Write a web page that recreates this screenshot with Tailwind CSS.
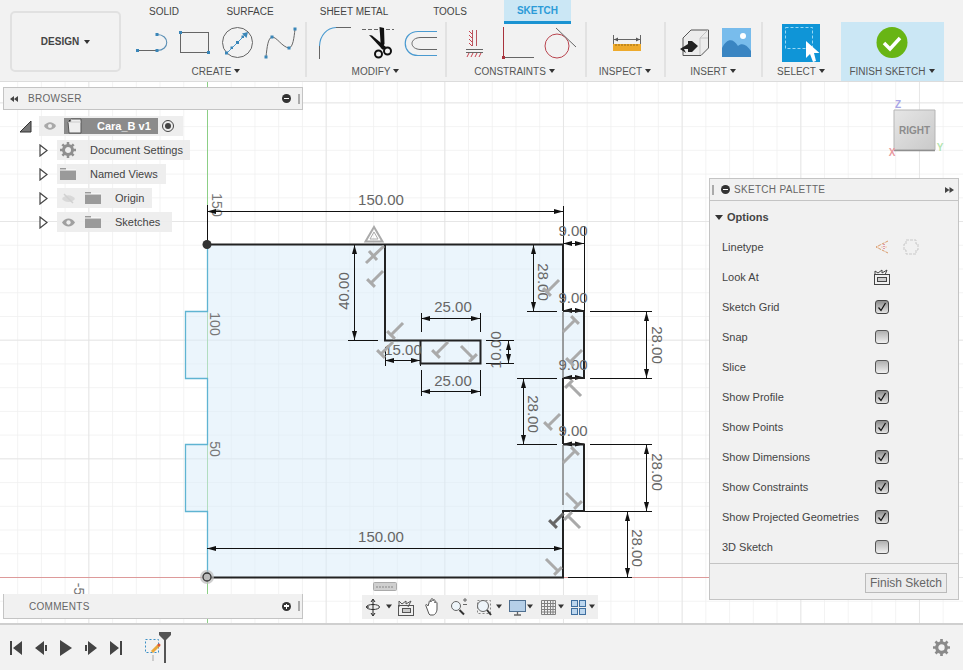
<!DOCTYPE html>
<html lang="en">
<head>
  <meta charset="UTF-8" />
  <title>Sketch workspace</title>
  <script src="https://cdn.jsdelivr.net/npm/@tailwindcss/browser@4"></script>
</head>
<body class="w-[963px] h-[670px] overflow-hidden bg-white font-['Liberation_Sans',sans-serif] text-[#444]">
<div class="flex flex-col h-[670px]">

  <!-- toolbar -->
  <header class="flex h-[82px] bg-[#f2f2f2] border-b border-[#dcdcdc] shrink-0">
    <div class="w-[130px] pl-[10px] pt-[11px] shrink-0">
      <div class="w-[111px] h-[61px] border-2 border-[#e1e1e1] rounded-[5px] flex items-center justify-center gap-[5px] text-[10px] font-bold text-[#444]">
        DESIGN <span class="border-x-[3px] border-t-[4px] border-x-transparent border-t-[#333]"></span>
      </div>
    </div>
    <div class="flex flex-col flex-1">
      <nav class="flex h-[22px] shrink-0 text-[10px] text-[#444]">
        <div class="w-[68px] h-[22px] flex items-center justify-center">SOLID</div>
        <div class="w-[104px] h-[22px] flex items-center justify-center">SURFACE</div>
        <div class="w-[104px] h-[22px] flex items-center justify-center">SHEET METAL</div>
        <div class="w-[88px] h-[22px] flex items-center justify-center">TOOLS</div>
        <div class="ml-[10px] w-[67px] h-[24px] flex items-center justify-center bg-[#cbe7f5] border-b-[3px] border-[#1b93d2] font-bold text-[#2b9bd8]">SKETCH</div>
      </nav>
      <div class="flex h-[59px]">
        <!-- create -->
        <div class="w-[177px] flex flex-col border-r-2 border-[#e2e2e2] mb-[4px]">
          <svg class="w-[177px] h-[41px] shrink-0" viewBox="130 22 177 41" fill="none">
            <path d="M138 50.500H157" stroke="#666"/><path d="M157 34.500C170 34.500 170 50.500 157 50.500" stroke="#5a8fb5" stroke-width="1.100"/>
            <rect x="136" y="49" width="3" height="3" fill="#3a86b8"/><rect x="155.500" y="49" width="3" height="3" fill="#3a86b8"/><rect x="155.500" y="33" width="3" height="3" fill="#3a86b8"/>
            <rect x="180.500" y="32.500" width="28" height="20" stroke="#666"/>
            <rect x="179" y="31" width="3" height="3" fill="#3a86b8"/><rect x="207" y="51" width="3" height="3" fill="#3a86b8"/>
            <circle cx="237.500" cy="42.500" r="15" stroke="#666"/>
            <path d="M227 53L247 33" stroke="#4a9ad0"/><path d="M248 32l-6 1.500 4.500 4.500z" fill="#3a86b8"/>
            <rect x="236" y="41" width="3" height="3" fill="#3a86b8"/><rect x="230.500" y="46.500" width="2.500" height="2.500" fill="#3a86b8"/><rect x="241.500" y="35.500" width="2.500" height="2.500" fill="#3a86b8"/><rect x="225" y="51.500" width="3" height="3" fill="#3a86b8"/>
            <path d="M266 57C267 47 268 38 272 37C277 37 282 47 289 48C293 47 294 38 295 29" stroke="#666"/>
            <rect x="264.500" y="55.500" width="3" height="3" fill="#3a86b8"/><rect x="270.500" y="35.500" width="3" height="3" fill="#3a86b8"/><rect x="287.500" y="46.500" width="3" height="3" fill="#3a86b8"/><rect x="293.500" y="27.500" width="3" height="3" fill="#3a86b8"/>
          </svg>
          <div class="flex items-center justify-center gap-[3px] text-[10px] text-[#555] h-[14px] shrink-0 mt-[1px] -ml-[3px]">CREATE <span class="border-x-[3px] border-t-[4px] border-x-transparent border-t-[#333]"></span></div>
        </div>
        <!-- modify -->
        <div class="w-[140px] flex flex-col border-r-2 border-[#e2e2e2] mb-[4px]">
          <svg class="w-[140px] h-[41px] shrink-0" viewBox="307 22 140 41" fill="none">
            <path d="M319.500 59V46" stroke="#666"/><path d="M319.500 46C320 35 327 28 336 27.500" stroke="#4a9ad0" stroke-width="1.100"/><path d="M336 27.500H351" stroke="#666"/>
            <path d="M362 29.500H394" stroke="#666" stroke-dasharray="4 2"/>
            <path d="M379.500 27L384 28L384.500 44L381 49Z" fill="#111"/><path d="M369 35L372 35.500L386 47L383 50Z" fill="#111"/>
            <circle cx="378.500" cy="54" r="3.500" stroke="#111" stroke-width="2"/><circle cx="387.500" cy="51" r="3.500" stroke="#111" stroke-width="2"/>
            <path d="M437 31.500H418C401 31.500 401 55.500 418 55.500H437" stroke="#4a9ad0" stroke-width="1.200"/>
            <path d="M437 37.500H421C409 37.500 409 49.500 421 49.500H437" stroke="#666"/>
          </svg>
          <div class="flex items-center justify-center gap-[3px] text-[10px] text-[#555] h-[14px] shrink-0 mt-[1px] -ml-[1px]">MODIFY <span class="border-x-[3px] border-t-[4px] border-x-transparent border-t-[#333]"></span></div>
        </div>
        <!-- constraints -->
        <div class="w-[140px] flex flex-col border-r-2 border-[#e2e2e2] mb-[4px]">
          <svg class="w-[140px] h-[41px] shrink-0" viewBox="447 22 140 41" fill="none">
            <path d="M472.500 30V46M476.500 30V46" stroke="#b9555f"/><path d="M469 31l3 3M469 35l3 3M469 39l3 3M469 43l3 3" stroke="#c9434f"/>
            <path d="M466 49.500H483" stroke="#666"/><path d="M466 52.500H483" stroke="#666"/><path d="M469 53l-2 4M473 53l-2 4M477 53l-2 4M481 53l-2 4" stroke="#c9434f"/>
            <path d="M503.500 27V58" stroke="#a8323c"/><path d="M503.500 57.500H534" stroke="#666"/><rect x="502" y="56" width="3" height="3" fill="#a8323c"/>
            <circle cx="557" cy="46" r="12" stroke="#b9444e"/><path d="M556 28L576 47" stroke="#666"/>
          </svg>
          <div class="flex items-center justify-center gap-[3px] text-[10px] text-[#555] h-[14px] shrink-0 mt-[1px] -ml-[3px]">CONSTRAINTS <span class="border-x-[3px] border-t-[4px] border-x-transparent border-t-[#333]"></span></div>
        </div>
        <!-- inspect -->
        <div class="w-[79px] flex flex-col border-r-2 border-[#e2e2e2] mb-[4px]">
          <svg class="w-[79px] h-[41px] shrink-0" viewBox="587 22 79 41" fill="none">
            <path d="M613.500 35V44M640.500 35V44" stroke="#666"/><path d="M614 39.500H640" stroke="#666"/><path d="M614 39.500l4-2v4zM640 39.500l-4-2v4z" fill="#555"/>
            <rect x="613" y="44" width="28" height="7" fill="#eeaa2c"/><path d="M616 44v2M619 44v2M622 44v2M625 44v2M628 44v2M631 44v2M634 44v2M637 44v2" stroke="#9a6a10"/>
          </svg>
          <div class="flex items-center justify-center gap-[3px] text-[10px] text-[#555] h-[14px] shrink-0 mt-[1px] -ml-[1px]">INSPECT <span class="border-x-[3px] border-t-[4px] border-x-transparent border-t-[#333]"></span></div>
        </div>
        <!-- insert -->
        <div class="w-[97px] flex flex-col border-r-2 border-[#e2e2e2] mb-[4px]">
          <svg class="w-[97px] h-[41px] shrink-0" viewBox="666 22 97 41" fill="none">
            <path d="M683 55.500V38L691 30H708.500V48L701 55.500Z" fill="#ececec" stroke="#555"/><path d="M700 55V38H708M700 38L708 30" stroke="#c4c4c4"/>
            <path d="M680 49L688 44V41H692L698 46L692 52H688V49H684L686 53Z" fill="#222"/>
            <rect x="722" y="28" width="29" height="29" fill="#78bcec"/><path d="M722 57V48C727 38 733 38 738 46C742 42 747 45 751 51V57Z" fill="#3a85c2"/><circle cx="743" cy="36" r="3" fill="#fff"/>
          </svg>
          <div class="flex items-center justify-center gap-[3px] text-[10px] text-[#555] h-[14px] shrink-0 mt-[1px] -ml-[1px]">INSERT <span class="border-x-[3px] border-t-[4px] border-x-transparent border-t-[#333]"></span></div>
        </div>
        <!-- select -->
        <div class="w-[78px] flex flex-col mb-[4px]">
          <svg class="w-[78px] h-[41px] shrink-0" viewBox="763 22 78 41" fill="none">
            <rect x="782" y="24" width="38" height="38" fill="#0f95d7"/><rect x="785.500" y="27.500" width="27" height="21" stroke="#9ad8f5" stroke-dasharray="3 2"/>
            <path d="M806 41V58L810 54L813 62L816 61L814 53H819.500Z" fill="#fff"/>
          </svg>
          <div class="flex items-center justify-center gap-[3px] text-[10px] text-[#555] h-[14px] shrink-0 mt-[1px] -ml-[2px]">SELECT <span class="border-x-[3px] border-t-[4px] border-x-transparent border-t-[#333]"></span></div>
        </div>
        <!-- finish sketch -->
        <div class="w-[103px] flex flex-col bg-[#cbe7f5]">
          <svg class="w-[103px] h-[41px] shrink-0" viewBox="841 22 103 41" fill="none">
            <circle cx="892" cy="42.500" r="15.500" fill="#68b514"/><path d="M884 43L890 49L900 38" stroke="#fff" stroke-width="3.500"/>
          </svg>
          <div class="flex items-center justify-center gap-[3px] text-[10px] text-[#555] h-[14px] shrink-0 mt-[1px] -ml-[1px]">FINISH SKETCH <span class="border-x-[3px] border-t-[4px] border-x-transparent border-t-[#333]"></span></div>
        </div>
      </div>
    </div>
  </header>

  <!-- canvas -->
  <main class="relative flex-1 overflow-hidden bg-white">
    <svg class="absolute inset-0" width="963" height="541" viewBox="0 82 963 541" fill="none" font-family="Liberation Sans" font-size="15">
      <defs>
        <pattern id="minor" patternUnits="userSpaceOnUse" x="207" y="577" width="23.730" height="23.730"><path d="M0 0H23.730M0 0V23.730" stroke="#f0f0f0" stroke-width="1.500"/></pattern>
        <pattern id="major" patternUnits="userSpaceOnUse" x="207" y="577" width="118.670" height="118.670"><path d="M0 0H118.670M0 0V118.670" stroke="#e2e2e2" stroke-width="1.500"/></pattern>
        <g id="t"><path d="M-5.500 0H5.500M0 0V17" stroke="#aaa" stroke-width="3"/></g>
        <g id="tdark"><path d="M-5.500 0H5.500M0 0V15" stroke="#666" stroke-width="3"/></g>
        <path id="ah" d="M0 0L9 -2.500V2.500Z" fill="#111"/>
      </defs>
      <rect x="0" y="82" width="963" height="541" fill="url(#minor)"/>
      <rect x="0" y="82" width="963" height="541" fill="url(#major)"/>

      <!-- axes -->
      <path d="M0 577.500H710" stroke="#dd9a9a"/>
      <path d="M207.500 82V623" stroke="#8ccf86"/>

      <!-- profile -->
      <path d="M207 244.500H563V311H584V378H563V444H584V511H563V577H207V511H185V444H207V378H185V311H207Z" fill="#d8ecfa" fill-opacity=".5"/>

      <!-- projected edge -->
      <path d="M207.500 245V311.500H185.500V378.500H207.500V444.500H185.500V511.500H207.500V577" stroke="#5fb4d2" stroke-width="1.300"/>

      <!-- grid labels -->
      <g fill="#777" font-size="14">
        <text transform="translate(212 205) rotate(90)" text-anchor="middle">150</text>
        <text transform="translate(210 324) rotate(90)" text-anchor="middle">100</text>
        <text transform="translate(210 449) rotate(90)" text-anchor="middle">50</text>
        <text transform="translate(74 589) rotate(90)" text-anchor="middle">-5</text>
      </g>

      <!-- dimensions -->
      <g stroke="#111">
        <path d="M207.500 205V244M207 211.500H563M563.500 206V244"/>
        <path d="M207 548.500H563"/>
        <path d="M584.500 226V311M563 243.500H584"/>
        <path d="M354.500 245V340M348 340.500H378"/>
        <path d="M533.500 245V311M527 311.500H557"/>
        <path d="M421.500 313V332M480.500 313V332M421 318.500H480"/>
        <path d="M421.500 370V396M480.500 370V396M421 391.500H480"/>
        <path d="M385.500 347V366M385 360.500H420M420.500 362V366"/>
        <path d="M486 340.500H514M486 363.500H514M508.500 341V363"/>
        <path d="M590 311.500H652M646.500 312V378M590 378.500H652"/>
        <path d="M517 378.500H557M523.500 379V444M517 444.500H557"/>
        <path d="M590 444.500H652M646.500 445V511M584 511.500H652"/>
        <path d="M627.500 511V577M568 577.500H632"/>
        <path d="M563 310.500H584M563 377.500H584M563 444H584"/>
      </g>
      <g>
        <use href="#ah" transform="translate(207 211.500)"/><use href="#ah" transform="translate(563 211.500) rotate(180)"/>
        <use href="#ah" transform="translate(207 548.500)"/><use href="#ah" transform="translate(563 548.500) rotate(180)"/>
        <use href="#ah" transform="translate(563 243.500)"/><use href="#ah" transform="translate(584 243.500) rotate(180)"/>
        <use href="#ah" transform="translate(563 310.500)"/><use href="#ah" transform="translate(584 310.500) rotate(180)"/>
        <use href="#ah" transform="translate(563 377.500)"/><use href="#ah" transform="translate(584 377.500) rotate(180)"/>
        <use href="#ah" transform="translate(563 444)"/><use href="#ah" transform="translate(584 444) rotate(180)"/>
        <use href="#ah" transform="translate(421 318.500)"/><use href="#ah" transform="translate(480 318.500) rotate(180)"/>
        <use href="#ah" transform="translate(421 391.500)"/><use href="#ah" transform="translate(480 391.500) rotate(180)"/>
        <use href="#ah" transform="translate(385 360.500)"/><use href="#ah" transform="translate(420 360.500) rotate(180)"/>
        <use href="#ah" transform="translate(354.500 245) rotate(90)"/><use href="#ah" transform="translate(354.500 340) rotate(-90)"/>
        <use href="#ah" transform="translate(533.500 245) rotate(90)"/><use href="#ah" transform="translate(533.500 311) rotate(-90)"/>
        <use href="#ah" transform="translate(508.500 341) rotate(90)"/><use href="#ah" transform="translate(508.500 363) rotate(-90)"/>
        <use href="#ah" transform="translate(646.500 312) rotate(90)"/><use href="#ah" transform="translate(646.500 378) rotate(-90)"/>
        <use href="#ah" transform="translate(523.500 379) rotate(90)"/><use href="#ah" transform="translate(523.500 444) rotate(-90)"/>
        <use href="#ah" transform="translate(646.500 445) rotate(90)"/><use href="#ah" transform="translate(646.500 511) rotate(-90)"/>
        <use href="#ah" transform="translate(627.500 512) rotate(90)"/><use href="#ah" transform="translate(627.500 577) rotate(-90)"/>
      </g>

      <!-- sketch outline -->
      <g stroke="#222" stroke-width="2">
        <path d="M207 244.500H563V311"/>
        <path d="M385 244V340.500H480.500V363.500H420.500V340"/>
        <path d="M563 378V444"/>
        <path d="M584 311V378H563M563 444.500H584V511H563V577.500H207"/>
        <path d="M563 311H584"/>
      </g>
      <path d="M563 312V378M563 445V505" stroke="#808080" stroke-width="1.500"/>
      <circle cx="207" cy="244.500" r="4.500" fill="#333"/>
      <circle cx="207" cy="577" r="7" fill="#bbb" fill-opacity=".7"/><circle cx="207" cy="577" r="4" fill="#bbb" stroke="#333" stroke-width="1.300"/>

      <!-- dimension values -->
      <g fill="#666" text-anchor="middle" font-size="15">
        <text x="381" y="205">150.00</text>
        <text x="381" y="542">150.00</text>
        <text x="573" y="236">9.00</text>
        <text x="573" y="303">9.00</text>
        <text x="573" y="370">9.00</text>
        <text x="573" y="436">9.00</text>
        <text x="453" y="312">25.00</text>
        <text x="453" y="385.500">25.00</text>
        <text x="403" y="355">15.00</text>
        <text transform="translate(348.500 291) rotate(-90)">40.00</text>
        <text transform="translate(538 282) rotate(90)">28.00</text>
        <text transform="translate(501 350) rotate(-90)">10.00</text>
        <text transform="translate(651.500 345) rotate(90)">28.00</text>
        <text transform="translate(527.500 414) rotate(90)">28.00</text>
        <text transform="translate(651.500 472) rotate(90)">28.00</text>
        <text transform="translate(631.500 548) rotate(90)">28.00</text>
      </g>

      <!-- constraint glyphs -->
      <g>
        <path d="M366 263L384 246M369 251L377 260" stroke="#aaa" stroke-width="3"/>
        <use href="#t" transform="translate(371 283) rotate(225)"/>
        <use href="#t" transform="translate(391 335) rotate(225)"/>
        <use href="#t" transform="translate(381 354) rotate(225)"/>
        <use href="#t" transform="translate(436 354) rotate(225)"/>
        <use href="#t" transform="translate(473 358) rotate(135)"/>
        <use href="#t" transform="translate(547 292) rotate(225)"/>
        <use href="#t" transform="translate(575 320) rotate(45)"/>
        <use href="#t" transform="translate(570 362) rotate(225)"/>
        <use href="#t" transform="translate(569 384) rotate(-45)"/>
        <use href="#t" transform="translate(548 426) rotate(225)"/>
        <use href="#t" transform="translate(575 451) rotate(45)"/>
        <use href="#t" transform="translate(578 505) rotate(135)"/>
        <use href="#t" transform="translate(568 516) rotate(-45)"/>
        <use href="#tdark" transform="translate(553 524) rotate(225)"/>
        <use href="#t" transform="translate(558 571) rotate(135)"/>
        <path d="M374 227L365.500 241.500H382.500Z" stroke="#aaa" stroke-width="2"/><path d="M374 232L370 239H378Z" stroke="#aaa"/>
      </g>

      <!-- view cube -->
      <defs><linearGradient id="cube" x1="0" y1="0" x2="1" y2="1"><stop offset="0" stop-color="#e6e6e6"/><stop offset="1" stop-color="#c9c9c9"/></linearGradient></defs>
      <path d="M894 110H935V150H894Z" fill="url(#cube)" stroke="#b5b5b5"/>
      <path d="M894 150.500H935" stroke="#8f8f8f" stroke-width="1.500"/>
      <text x="914.500" y="134" text-anchor="middle" font-size="10" font-weight="700" fill="#8c8c8c">RIGHT</text>
      <text x="898" y="108" text-anchor="middle" font-size="10" font-weight="700" fill="#a9a6e6">Z</text>
      <text x="892" y="156" text-anchor="middle" font-size="10" font-weight="700" fill="#e89aa0">X</text>
      <text x="940" y="151" text-anchor="middle" font-size="10" font-weight="700" fill="#b5e4b0">Y</text>

      <!-- sketch scale chip -->
      <rect x="373.500" y="582.500" width="23" height="8" fill="#cfcfcf" stroke="#aaa" rx="1"/>
      <path d="M376 587h18" stroke="#888" stroke-dasharray="2 1"/>
    </svg>

    <!-- browser panel -->
    <aside class="absolute left-[3px] top-[5px] w-[300px]">
      <div class="h-[23px] flex items-center bg-[#f1f1f1] border border-[#c4c4c4] pl-[6px] pr-[1px] text-[10px] tracking-[.3px] text-[#666]">
        <svg class="w-[8px] h-[6px]" viewBox="0 0 8 6"><path d="M4 0v6L0 3zM8 0v6L4 3z" fill="#444"/></svg>
        <span class="ml-[10px]">BROWSER</span>
        <span class="ml-auto w-[9px] h-[9px] rounded-full bg-[#333] flex items-center justify-center"><span class="w-[5px] h-[1.5px] bg-white"></span></span>
        <span class="ml-[7px] mr-[1px] w-[2px] h-[10px] border-x border-[#aaa]"></span>
      </div>

      <div class="flex items-center h-[18px] mt-[7px] ml-[16px]">
        <svg class="w-[13px] h-[13px] shrink-0" viewBox="0 0 13 13"><path d="M12 1V12H1Z" fill="#777" stroke="#333"/></svg>
        <div class="ml-[7px] w-[144px] h-[20px] bg-[#ececec]/90 flex items-center pl-[5px]">
          <svg class="w-[12px] h-[8px] shrink-0" viewBox="0 0 12 8"><path d="M0 4C3 -1 9 -1 12 4C9 9 3 9 0 4Z" fill="#a9a9a9"/><circle cx="6" cy="4" r="2" fill="#eee"/></svg>
          <div class="ml-[8px] w-[94px] h-[16px] bg-[#8b8b8b] flex items-center text-[11px] font-bold text-white">
            <svg class="ml-[3px] w-[15px] h-[16px] shrink-0" viewBox="0 0 15 16"><path d="M1 4L4 1H14V15H2Z" fill="#eee" stroke="#555"/><path d="M4 1V4H1M4 4H14" stroke="#ccc"/></svg>
            <span class="ml-[15px]">Cara_B v1</span>
          </div>
          <span class="ml-[4px] w-[12px] h-[12px] rounded-full border border-[#444] flex items-center justify-center"><span class="w-[6px] h-[6px] rounded-full bg-[#444]"></span></span>
        </div>
      </div>

      <div class="flex items-center h-[20px] mt-[5px] ml-[36px]">
        <svg class="w-[9px] h-[13px] shrink-0" viewBox="0 0 9 13"><path d="M1 1L8 6.500L1 12Z" fill="#fff" stroke="#444" stroke-width="1.200"/></svg>
        <div class="ml-[9px] h-[20px] w-[133px] bg-[#ececec]/90 flex items-center pl-[3px] text-[11px] text-[#444]">
          <svg class="w-[16px] h-[16px] shrink-0" viewBox="0 0 16 16"><circle cx="8" cy="8" r="4.500" fill="none" stroke="#8f8f8f" stroke-width="3"/><path d="M8 0V16M0 8H16M2.300 2.300L13.700 13.700M13.700 2.300L2.300 13.700" stroke="#8f8f8f" stroke-width="2.500" stroke-dasharray="3 10"/></svg>
          <span class="ml-[14px]">Document Settings</span>
        </div>
      </div>
      <div class="flex items-center h-[20px] mt-[4px] ml-[36px]">
        <svg class="w-[9px] h-[13px] shrink-0" viewBox="0 0 9 13"><path d="M1 1L8 6.500L1 12Z" fill="#fff" stroke="#444" stroke-width="1.200"/></svg>
        <div class="ml-[9px] h-[20px] w-[109px] bg-[#ececec]/90 flex items-center pl-[3px] text-[11px] text-[#444]">
          <svg class="w-[16px] h-[12px] shrink-0" viewBox="0 0 16 12"><path d="M0 0H6V2H16V12H0Z" fill="#9a9a9a"/><path d="M0 2H16" stroke="#fff"/></svg>
          <span class="ml-[14px]">Named Views</span>
        </div>
      </div>
      <div class="flex items-center h-[20px] mt-[4px] ml-[36px]">
        <svg class="w-[9px] h-[13px] shrink-0" viewBox="0 0 9 13"><path d="M1 1L8 6.500L1 12Z" fill="#fff" stroke="#444" stroke-width="1.200"/></svg>
        <div class="ml-[9px] h-[20px] w-[95px] bg-[#ececec]/90 flex items-center pl-[5px] text-[11px] text-[#444]">
          <svg class="w-[13px] h-[11px] shrink-0" viewBox="0 0 13 11" fill="none"><path d="M0 6C3 1 10 1 13 6C10 10 3 10 0 6Z" fill="#d8d8d8"/><path d="M2 1L11 10" stroke="#d0d0d0" stroke-width="1.500"/></svg>
          <svg class="ml-[10px] w-[16px] h-[12px] shrink-0" viewBox="0 0 16 12"><path d="M0 0H6V2H16V12H0Z" fill="#9a9a9a"/><path d="M0 2H16" stroke="#fff"/></svg>
          <span class="ml-[14px]">Origin</span>
        </div>
      </div>
      <div class="flex items-center h-[20px] mt-[4px] ml-[36px]">
        <svg class="w-[9px] h-[13px] shrink-0" viewBox="0 0 9 13"><path d="M1 1L8 6.500L1 12Z" fill="#fff" stroke="#444" stroke-width="1.200"/></svg>
        <div class="ml-[9px] h-[20px] w-[115px] bg-[#ececec]/90 flex items-center pl-[5px] text-[11px] text-[#444]">
          <svg class="w-[13px] h-[9px] shrink-0" viewBox="0 0 12 8"><path d="M0 4C3 -1 9 -1 12 4C9 9 3 9 0 4Z" fill="#a0a0a0"/><circle cx="6" cy="4" r="2" fill="#eee"/></svg>
          <svg class="ml-[10px] w-[16px] h-[12px] shrink-0" viewBox="0 0 16 12"><path d="M0 0H6V2H16V12H0Z" fill="#9a9a9a"/><path d="M0 2H16" stroke="#fff"/></svg>
          <span class="ml-[14px]">Sketches</span>
        </div>
      </div>
    </aside>

    <!-- comments panel -->
    <aside class="absolute left-[3px] top-[512px] w-[300px] h-[25px] flex items-center bg-[#f1f1f1] border border-t-0 border-[#c4c4c4] pl-[25px] pr-[1px] text-[10px] tracking-[.3px] text-[#666]">
      <span>COMMENTS</span>
      <span class="ml-auto w-[9px] h-[9px] rounded-full bg-[#333] flex items-center justify-center relative"><span class="w-[5px] h-[1.500px] bg-white"></span><span class="absolute w-[1.500px] h-[5px] bg-white"></span></span>
      <span class="ml-[7px] mr-[1px] w-[2px] h-[10px] border-x border-[#aaa]"></span>
    </aside>

    <!-- navigation bar -->
    <div class="absolute left-[362px] top-[513px] w-[236px] h-[24px] bg-[#efefef]">
      <svg width="236" height="24" viewBox="362 595 236 24" fill="none">
        <ellipse cx="373" cy="607" rx="6.500" ry="2.500" stroke="#333"/><path d="M373 600V615M371 602l2-3 2 3M371 613l2 3 2-3" stroke="#222"/><path d="M366 607h3" stroke="#222"/>
        <path d="M386 604.500h6l-3 4z" fill="#333"/>
        <path d="M399 607V601L402 604L406 601V604L411 601L408 607" stroke="#555"/><rect x="398.500" y="605.500" width="15" height="10" stroke="#555"/><rect x="402.500" y="608.500" width="8" height="4" stroke="#555" fill="#ccc"/>
        <path d="M429 614L426 606C425 604 427 604 428 606L429 603C429 600 431 600 431 602V600C431 598 433 598 433 600V601C433 599 435 599 435 601V603C435 601 437 602 437 603V609C437 612 435 615 433 615H430Z" fill="#fff" stroke="#555"/>
        <circle cx="456" cy="606" r="4.500" stroke="#666" fill="#eef5fa"/><path d="M459.500 610L464 614.500" stroke="#333" stroke-width="2"/><path d="M463 600h4M465 598v4M463 604.500h4" stroke="#666"/>
        <rect x="477.500" y="600.500" width="13" height="13" stroke="#888" stroke-dasharray="2 2"/><circle cx="483" cy="606" r="5.500" stroke="#666" fill="#eef5fa"/><path d="M487 610L491 615" stroke="#333" stroke-width="2"/>
        <path d="M496 604.500h6l-3 4z" fill="#333"/>
        <rect x="509.500" y="600.500" width="16" height="11" fill="#b5cfe8" stroke="#4f6f90"/><path d="M514 615H521M517.500 612V615" stroke="#666" stroke-width="1.300"/>
        <path d="M527 604.500h6l-3 4z" fill="#333"/>
        <path d="M541.500 600.500h14v14h-14zM544.500 600.500v14M547.500 600.500v14M550.500 600.500v14M553 600.500v14M541.500 603.500h14M541.500 606.500h14M541.500 609.500h14M541.500 612h14" stroke="#808080"/>
        <path d="M558 604.500h6l-3 4z" fill="#333"/>
        <rect x="571.500" y="600.500" width="6" height="6" fill="#bcd6ee" stroke="#3f6f9f"/><rect x="579.500" y="600.500" width="6" height="6" fill="#bcd6ee" stroke="#3f6f9f"/><rect x="571.500" y="608.500" width="6" height="6" fill="#bcd6ee" stroke="#3f6f9f"/><rect x="579.500" y="608.500" width="6" height="6" fill="#bcd6ee" stroke="#3f6f9f"/>
        <path d="M589 604.500h6l-3 4z" fill="#333"/>
      </svg>
    </div>

    <!-- sketch palette -->
    <aside class="absolute left-[709px] top-[96px] w-[250px] h-[422px] flex flex-col bg-[#f1f1f1] border border-[#c4c4c4] text-[11px] text-[#444]">
      <div class="h-[22px] shrink-0 flex items-center border-b border-[#c4c4c4] pl-[2px] pr-[4px] text-[10px] tracking-[.3px] text-[#666]">
        <span class="w-[2px] h-[10px] border-x border-[#aaa]"></span>
        <span class="ml-[7px] w-[9px] h-[9px] rounded-full bg-[#333] flex items-center justify-center"><span class="w-[5px] h-[1.500px] bg-white"></span></span>
        <span class="ml-[4px]">SKETCH PALETTE</span>
        <svg class="ml-auto w-[9px] h-[6px]" viewBox="0 0 9 6"><path d="M0 0v6L4.500 3zM4.500 0v6L9 3z" fill="#444"/></svg>
      </div>
      <div class="h-[31px] shrink-0 flex items-center pl-[5px] pt-[2px] font-bold text-[11px]">
        <span class="border-x-[4px] border-t-[5px] border-x-transparent border-t-[#333]"></span>
        <span class="ml-[4px]">Options</span>
      </div>
      <div class="flex flex-col pl-[12px]">
        <div class="h-[30px] flex items-center">
          <span class="w-[153px]">Linetype</span>
          <svg class="w-[16px] h-[16px] -ml-[1px]" viewBox="0 0 16 16" fill="none"><path d="M14 2L2 8L14 14" stroke="#d99a6a" stroke-dasharray="3 1"/><path d="M10 5v6" stroke="#c46" stroke-dasharray="1 1"/><path d="M3 8h10" stroke="#f3c9a8" stroke-dasharray="2 2"/></svg>
          <svg class="ml-[13px] w-[16px] h-[16px]" viewBox="0 0 16 16" fill="none"><path d="M3 1h10v4h2v6h-2v4H3v-4H1V5h2z" stroke="#c9c9c9" stroke-dasharray="3 1"/></svg>
        </div>
        <div class="h-[30px] flex items-center">
          <span class="w-[152px]">Look At</span>
          <svg class="w-[16px] h-[16px]" viewBox="0 0 16 16" fill="none"><path d="M1 6V2L4 4L8 1V4L13 1L11 6" stroke="#444"/><rect x=".5" y="5.500" width="15" height="10" stroke="#444"/><rect x="3.500" y="8.500" width="9" height="4" stroke="#444" fill="#ccc"/></svg>
        </div>
        <div class="h-[30px] flex items-center">
          <span class="w-[153px]">Sketch Grid</span>
          <span class="w-[14px] h-[14px] border border-[#444] rounded-[3px] bg-linear-to-b from-[#8c8c8c] to-[#e6e6e6] flex items-center justify-center"><svg class="w-[10px] h-[10px]" viewBox="0 0 10 10" fill="none"><path d="M1.500 5.500L4 8.500L8.500 1" stroke="#111" stroke-width="1.200"/></svg></span>
        </div>
        <div class="h-[30px] flex items-center">
          <span class="w-[153px]">Snap</span>
          <span class="w-[14px] h-[14px] border border-[#555] rounded-[3px] bg-linear-to-b from-[#b0b0b0] to-[#f0f0f0]"></span>
        </div>
        <div class="h-[30px] flex items-center">
          <span class="w-[153px]">Slice</span>
          <span class="w-[14px] h-[14px] border border-[#555] rounded-[3px] bg-linear-to-b from-[#b0b0b0] to-[#f0f0f0]"></span>
        </div>
        <div class="h-[30px] flex items-center">
          <span class="w-[153px]">Show Profile</span>
          <span class="w-[14px] h-[14px] border border-[#444] rounded-[3px] bg-linear-to-b from-[#8c8c8c] to-[#e6e6e6] flex items-center justify-center"><svg class="w-[10px] h-[10px]" viewBox="0 0 10 10" fill="none"><path d="M1.500 5.500L4 8.500L8.500 1" stroke="#111" stroke-width="1.200"/></svg></span>
        </div>
        <div class="h-[30px] flex items-center">
          <span class="w-[153px]">Show Points</span>
          <span class="w-[14px] h-[14px] border border-[#444] rounded-[3px] bg-linear-to-b from-[#8c8c8c] to-[#e6e6e6] flex items-center justify-center"><svg class="w-[10px] h-[10px]" viewBox="0 0 10 10" fill="none"><path d="M1.500 5.500L4 8.500L8.500 1" stroke="#111" stroke-width="1.200"/></svg></span>
        </div>
        <div class="h-[30px] flex items-center">
          <span class="w-[153px]">Show Dimensions</span>
          <span class="w-[14px] h-[14px] border border-[#444] rounded-[3px] bg-linear-to-b from-[#8c8c8c] to-[#e6e6e6] flex items-center justify-center"><svg class="w-[10px] h-[10px]" viewBox="0 0 10 10" fill="none"><path d="M1.500 5.500L4 8.500L8.500 1" stroke="#111" stroke-width="1.200"/></svg></span>
        </div>
        <div class="h-[30px] flex items-center">
          <span class="w-[153px]">Show Constraints</span>
          <span class="w-[14px] h-[14px] border border-[#444] rounded-[3px] bg-linear-to-b from-[#8c8c8c] to-[#e6e6e6] flex items-center justify-center"><svg class="w-[10px] h-[10px]" viewBox="0 0 10 10" fill="none"><path d="M1.500 5.500L4 8.500L8.500 1" stroke="#111" stroke-width="1.200"/></svg></span>
        </div>
        <div class="h-[30px] flex items-center">
          <span class="w-[153px]">Show Projected Geometries</span>
          <span class="w-[14px] h-[14px] border border-[#444] rounded-[3px] bg-linear-to-b from-[#8c8c8c] to-[#e6e6e6] flex items-center justify-center"><svg class="w-[10px] h-[10px]" viewBox="0 0 10 10" fill="none"><path d="M1.500 5.500L4 8.500L8.500 1" stroke="#111" stroke-width="1.200"/></svg></span>
        </div>
        <div class="h-[30px] flex items-center">
          <span class="w-[153px]">3D Sketch</span>
          <span class="w-[14px] h-[14px] border border-[#555] rounded-[3px] bg-linear-to-b from-[#b0b0b0] to-[#f0f0f0]"></span>
        </div>
      </div>
      <div class="mt-[1px] flex-1 flex items-start justify-end border-t border-[#c4c4c4] pr-[11px] pt-[9px]">
        <span class="w-[82px] h-[20px] flex items-center justify-center border border-[#bbb] bg-[#ececec] text-[12px] text-[#666]">Finish Sketch</span>
      </div>
    </aside>
  </main>

  <!-- timeline -->
  <footer class="h-[47px] shrink-0 flex items-center bg-[#f2f2f2] border-t-2 border-[#cfcfcf] pl-[10px] pr-[13px]">
    <svg class="w-[12px] h-[14px]" viewBox="0 0 12 14"><path d="M0 0h2v14H0zM12 0v14L3 7z" fill="#444"/></svg>
    <svg class="ml-[13px] w-[13px] h-[14px]" viewBox="0 0 13 14"><path d="M9 0v14L0 7zM10 4h2v6h-2z" fill="#444"/></svg>
    <svg class="ml-[12px] w-[12px] h-[16px]" viewBox="0 0 12 16"><path d="M0 0L12 8L0 16z" fill="#444"/></svg>
    <svg class="ml-[12px] w-[13px] h-[14px]" viewBox="0 0 13 14"><path d="M4 0v14L13 7zM1 4h2v6H1z" fill="#444"/></svg>
    <svg class="ml-[13px] w-[12px] h-[14px]" viewBox="0 0 12 14"><path d="M10 0h2v14h-2zM0 0v14L9 7z" fill="#444"/></svg>
    <svg class="ml-[23px] w-[27px] h-[32px] mt-[-1px]" viewBox="0 0 27 32" fill="none">
      <rect x=".5" y="8.500" width="13" height="13" stroke="#3a8fc5" stroke-dasharray="2 2"/>
      <path d="M7 21L14 14" stroke="#e9a73a" stroke-width="3"/><circle cx="14" cy="14" r="1.500" fill="#d8563c"/>
      <path d="M8 24v6" stroke="#ccc" stroke-width="2"/>
      <path d="M14 1H26V4L21 9V32H19V9L14 4Z" fill="#555"/>
    </svg>
    <svg class="ml-auto w-[17px] h-[17px]" viewBox="0 0 16 16"><circle cx="8" cy="8" r="4.500" fill="none" stroke="#8a8a8a" stroke-width="3"/><path d="M8 0V16M0 8H16M2.300 2.300L13.700 13.700M13.700 2.300L2.300 13.700" stroke="#8a8a8a" stroke-width="2.500" stroke-dasharray="3 10"/></svg>
  </footer>
</div>
</body>
</html>
